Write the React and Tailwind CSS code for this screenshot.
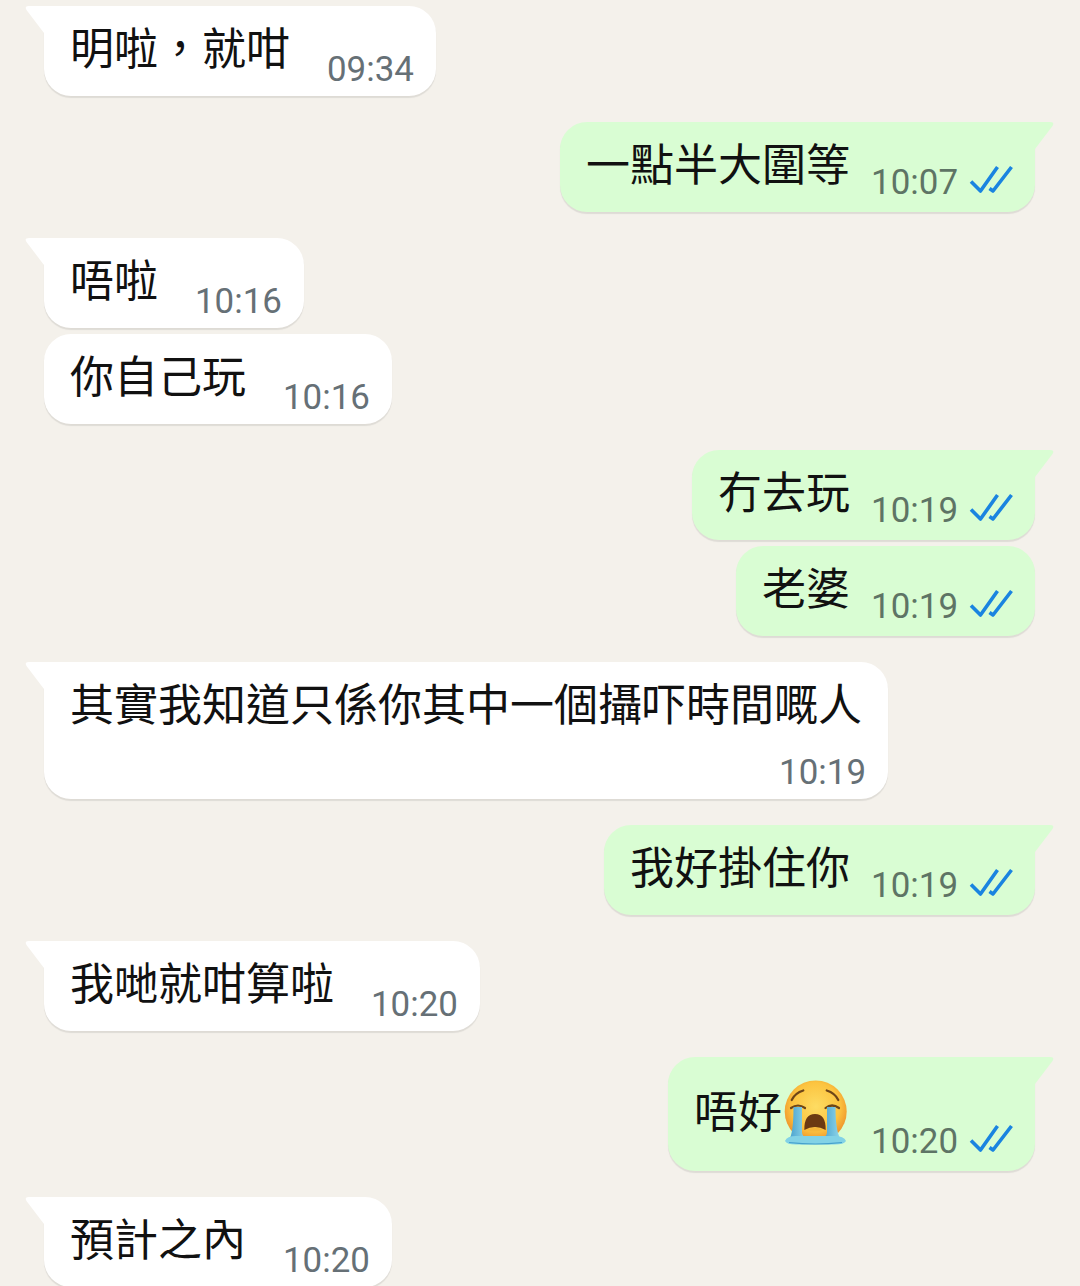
import React from 'react';

const CJK = "font-['Noto_Sans_CJK_TC','Noto_Sans_CJK_SC',sans-serif]";

const DoubleCheck = () => (
  <svg width="44" height="30" viewBox="0 0 44 30" fill="none" className="shrink-0 mb-[8px]">
    <path d="M2 17.5 L11.5 27 L28.5 3" stroke="#1a84e0" strokeWidth="3.6" strokeLinejoin="round" />
    <path d="M20.5 24.5 L24 27 L42.5 3" stroke="#1a84e0" strokeWidth="3.6" strokeLinejoin="round" />
  </svg>
);

const CryingFace = () => (
  <svg width="68" height="68" viewBox="0 0 68 68" className="shrink-0">
    <defs>
      <radialGradient id="face" cx="50%" cy="42%" r="55%">
        <stop offset="0%" stopColor="#fddc63" />
        <stop offset="70%" stopColor="#fcc440" />
        <stop offset="100%" stopColor="#ef952c" />
      </radialGradient>
      <linearGradient id="tear" x1="0" y1="0" x2="1" y2="0">
        <stop offset="0%" stopColor="#4ba3d0" />
        <stop offset="100%" stopColor="#8fd6e8" />
      </linearGradient>
    </defs>
    <circle cx="33.7" cy="31.5" r="31" fill="url(#face)" />
    <path d="M9.7 20 Q13 13 21.3 10.5" stroke="#6e4518" strokeWidth="2.2" fill="none" strokeLinecap="round" />
    <path d="M56.3 20 Q53 13 44.7 10.5" stroke="#6e4518" strokeWidth="2.2" fill="none" strokeLinecap="round" />
    <path d="M9 28 Q16 23 23 28" stroke="#6e4518" strokeWidth="2.2" fill="none" strokeLinecap="round" />
    <path d="M43.5 28 Q50 23 57 28" stroke="#6e4518" strokeWidth="2.2" fill="none" strokeLinecap="round" />
    <path d="M22.3 50 Q22 34 33 34 Q44 34 43.7 50 Q33 44 22.3 50 Z" fill="#6b3a12" />
    <path d="M25 50 Q33 45 41 50 Q33 53 25 50 Z" fill="#f6b73a" />
    <path d="M11.5 27 L20 27 L20 52 Q20 56 24 58 L8 58 Q11.5 50 11.5 27 Z" fill="url(#tear)" />
    <path d="M45 27 L53.5 27 Q53.5 50 58 58 L41 58 Q45 56 45 52 Z" fill="url(#tear)" />
    <path d="M3 61 Q5 56 14 56 L52 56 Q62 56 64 61 Q62 65 50 64.5 L16 64.5 Q5 65 3 61 Z" fill="#82d2e6" />
    <path d="M7 62.5 Q33 65.5 60 62.5" stroke="#45a0cc" strokeWidth="1.1" fill="none" />
  </svg>
);

// tail sticks out of the top corner, 20px beyond the bubble
const Tail = ({ mine }) => (
  <svg
    width="22"
    height="30"
    viewBox="0 0 22 30"
    className={mine ? 'absolute top-0 left-full -ml-[2px]' : 'absolute top-0 right-full -mr-[2px] -scale-x-100'}
  >
    <path d="M0 0 L17 0 Q22 0 19.5 4 L2 27 L0 27 Z" fill={mine ? '#d9fdd3' : '#ffffff'} />
  </svg>
);

const Time = ({ mine, children }) => (
  <div className={`flex items-center gap-[11px] font-['Roboto',sans-serif] text-[34.9px] leading-[40px] ${mine ? 'text-[#5e7465] mb-[3px]' : 'text-[#667076]'}`}>
    <span>{children}</span>
    {mine && <DoubleCheck />}
  </div>
);

const Bubble = ({ mine, tail, time, stacked, tall, children }) => {
  const shell = mine
    ? 'self-end mr-[45px] bg-[#d9fdd3]'
    : 'self-start ml-[44px] bg-white';
  const corners = tail ? (mine ? 'rounded-tr-none' : 'rounded-tl-none') : '';
  return (
    <div className={`relative rounded-[27px] shadow-[0_2px_1px_rgba(0,0,0,0.09)] pl-[26px] pr-[22px] first:mt-[6px] ${shell} ${corners} ${tail ? 'mt-[26px]' : 'mt-[6px]'}`}>
      {tail && <Tail mine={mine} />}
      {stacked ? (
        <div className="flex flex-col pt-[10px] pb-[6px]">
          <div className={`${CJK} text-[44px] leading-[60px] text-[#111] mr-[4px]`}>{children}</div>
          <div className="self-end mt-[21px]"><Time mine={mine}>{time}</Time></div>
        </div>
      ) : (
        <div className={`flex items-end pb-[6px] ${mine ? 'gap-[21px]' : 'gap-[37px]'}`}>
          <div className={`${CJK} flex items-center text-[44px] leading-[60px] text-[#111] ${tall ? 'pt-[23px] pb-[17px]' : 'pt-[10px] pb-[14px]'}`}>{children}</div>
          <Time mine={mine}>{time}</Time>
        </div>
      )}
    </div>
  );
};

const App = () => {
  return (
    <div className="w-[1080px] h-[1286px] overflow-hidden bg-[#f4f1eb] flex flex-col">
      <Bubble tail time="09:34">明啦，就咁</Bubble>
      <Bubble mine tail time="10:07">一點半大圍等</Bubble>
      <Bubble tail time="10:16">唔啦</Bubble>
      <Bubble time="10:16">你自己玩</Bubble>
      <Bubble mine tail time="10:19">冇去玩</Bubble>
      <Bubble mine time="10:19">老婆</Bubble>
      <Bubble tail stacked time="10:19">其實我知道只係你其中一個攝吓時間嘅人</Bubble>
      <Bubble mine tail time="10:19">我好掛住你</Bubble>
      <Bubble tail time="10:20">我哋就咁算啦</Bubble>
      <Bubble mine tail tall time="10:20">
        <span className="-mt-[10px]">唔好</span>
        <CryingFace />
      </Bubble>
      <Bubble tail time="10:20">預計之內</Bubble>
    </div>
  );
};

export default App;
